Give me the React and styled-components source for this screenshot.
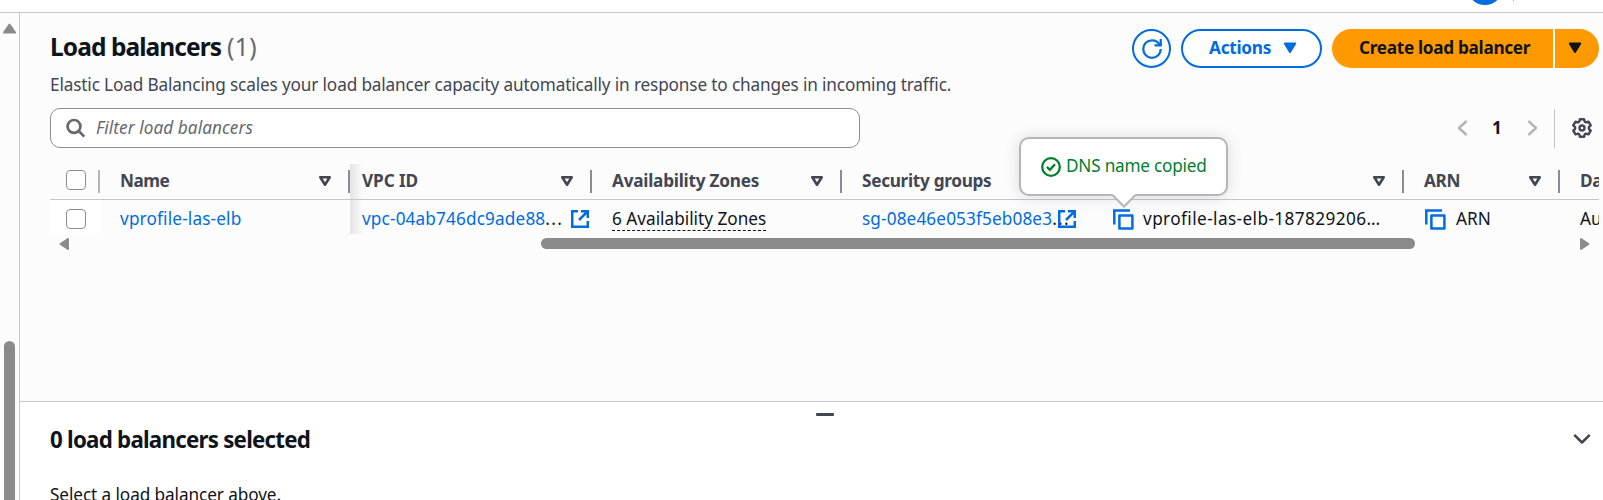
import React from 'react';
import styled, { createGlobalStyle, css } from 'styled-components';

const Global = createGlobalStyle`
  * { box-sizing: border-box; }
  body { margin: 0; background: #fff; overflow: hidden; }
`;

const Page = styled.div`
  display: flex;
  flex-direction: column;
  height: 500px;
  overflow: hidden;
  font-family: 'Noto Sans', 'Open Sans', sans-serif;
  font-size: 17.2px;
  line-height: 24px;
  color: #0f141a;
  white-space: nowrap;
`;

const TopBar = styled.header`
  flex: none;
  display: flex;
  justify-content: flex-end;
  align-items: flex-start;
  height: 13px;
  padding-right: 89px;
  overflow: hidden;
  border-bottom: 1px solid #c6c6cd;
`;

const Avatar = styled.span`
  width: 36px;
  height: 36px;
  margin-top: -31px;
  margin-right: 10px;
  border-radius: 50%;
  background: #006ce0;
`;

const BarTick = styled.span`
  width: 1px;
  height: 1px;
  background: #b4b4bb;
`;

const Body = styled.div`
  flex: 1;
  display: flex;
  min-height: 0;
`;

const Rail = styled.aside`
  flex: none;
  display: flex;
  flex-direction: column;
  width: 20px;
  padding: 10px 0 0 3px;
  background: #fcfcfd;
  border-right: 1px solid #c6c6cd;
`;

const RailThumb = styled.div`
  flex: 1;
  width: 11px;
  margin: 307px 0 0 1px;
  border-radius: 6px 6px 0 0;
  background: #8b8b8b;
`;

const Content = styled.div`
  flex: 1;
  min-width: 0;
  display: flex;
  flex-direction: column;
`;

const ListPanel = styled.main`
  flex: none;
  height: 388px;
  padding: 16px 4px 0 30px;
  background: #fcfcfd;
`;

const TitleRow = styled.div`
  display: flex;
  justify-content: space-between;
  height: 39px;
`;

const Title = styled.h1`
  margin: 0;
  font-size: 24.5px;
  font-weight: 700;
  line-height: 35px;
  letter-spacing: -0.93px;
`;

const Counter = styled.span`
  margin-left: 6px;
  font-weight: 400;
  letter-spacing: 0.4px;
  color: #656871;
`;

const Buttons = styled.div`
  display: flex;
  gap: 10px;
`;

const buttonBase = css`
  display: flex;
  align-items: center;
  height: 39px;
  padding: 0 0 1px;
  font: inherit;
  font-weight: 700;
  cursor: pointer;
`;

const OutlineButton = styled.button`
  ${buttonBase}
  width: ${(p) => p.$width}px;
  justify-content: ${(p) => (p.$round ? 'center' : 'flex-start')};
  padding-left: ${(p) => (p.$round ? 0 : 26)}px;
  padding-bottom: ${(p) => (p.$round ? 0 : 1)}px;
  gap: 12px;
  border: 2px solid #006ce0;
  border-radius: 20px;
  background: #fff;
  color: #006ce0;
  letter-spacing: -0.25px;
`;

const SplitButton = styled.div`
  display: flex;
  gap: 2px;
`;

const PrimaryButton = styled.button`
  ${buttonBase}
  justify-content: ${(p) => (p.$end ? 'center' : 'flex-start')};
  width: ${(p) => p.$width}px;
  border: 0;
  border-radius: ${(p) => (p.$end ? '0 20px 20px 0' : '20px 0 0 20px')};
  padding-left: ${(p) => (p.$end ? 0 : 27)}px;
  padding-right: ${(p) => (p.$end ? 4 : 0)}px;
  background: #ff9900;
  color: #0f141a;
  letter-spacing: -0.3px;
`;

const Description = styled.p`
  margin: 4px 0 0;
  line-height: 25px;
  letter-spacing: -0.14px;
  color: #424650;
`;

const Tools = styled.div`
  display: flex;
  align-items: center;
  justify-content: space-between;
  height: 40px;
  margin-top: 11px;
`;

const SearchBox = styled.div`
  display: flex;
  align-items: center;
  gap: 10px;
  width: 810px;
  height: 40px;
  padding-left: 15px;
  border: 1px solid #8c8c94;
  border-radius: 10px;
  background: #fff;
`;

const Placeholder = styled.span`
  font-style: italic;
  letter-spacing: 0.07px;
  color: #656871;
`;

const Pager = styled.nav`
  display: flex;
  align-items: center;
  padding-right: 7px;
`;

const PageNumber = styled.span`
  width: 10px;
  margin: 0 25px 0 24px;
  text-align: center;
  font-weight: 700;
`;

const PagerRule = styled.span`
  width: 1px;
  height: 39px;
  margin: 0 17px 0 16px;
  background: #c6c6cd;
`;

const Table = styled.div`
  margin-top: 16px;
  overflow-x: clip;
`;

const TableRow = styled.div`
  display: grid;
  grid-template-columns: 50px 250px 242px 250px 250px 312px 156px 39px;
  height: ${(p) => (p.$head ? 36 : 34)}px;
  border-bottom: ${(p) => (p.$head ? '1px solid #c6c6cd' : '0')};
`;

const stickyShadow = css`
  background-image: linear-gradient(to right, rgba(15, 20, 26, 0.1), rgba(15, 20, 26, 0));
  background-size: 13px 100%;
  background-repeat: no-repeat;
`;

const HeadCell = styled.div`
  display: flex;
  align-items: center;
  justify-content: space-between;
  min-width: 0;
  padding: 0 0 1px ${(p) => (p.$shadow ? 12 : 20)}px;
  font-weight: 700;
  letter-spacing: ${(p) => p.$spacing || '-0.23px'};
  color: #424650;
  ${(p) => p.$shadow && stickyShadow}
`;

const HeadTools = styled.span`
  display: flex;
  align-items: center;
  gap: 16px;
  height: 100%;
`;

const Divider = styled.i`
  width: 2px;
  height: 23px;
  background: ${(p) => (p.$light ? '#b4b4bb' : '#8c8c94')};
`;

const CheckCell = styled.div`
  display: flex;
  align-items: center;
  justify-content: space-between;
  padding-left: 16px;
  background: ${(p) => (p.$body ? '#fff' : 'transparent')};
`;

const Checkbox = styled.span`
  width: 20px;
  height: 20px;
  margin-top: ${(p) => (p.$body ? 4 : -3)}px;
  border: 1px solid #8c8c94;
  border-radius: 4px;
  background: #fff;
`;

const Cell = styled.div`
  position: relative;
  display: flex;
  align-items: center;
  min-width: 0;
  padding: 4px 0 0 ${(p) => (p.$shadow ? 12 : 20)}px;
  letter-spacing: ${(p) => p.$spacing || '0'};
  ${(p) => p.$shadow && stickyShadow}
`;

const Link = styled.a`
  color: #006ce0;
  text-decoration: none;
`;

const Dots = styled.span`
  letter-spacing: 1.3px;
`;

const IconSlot = styled.span`
  display: flex;
  margin: ${(p) => p.$margin || '0'};
`;

const Dashed = styled.span`
  height: 23px;
  line-height: 22px;
  border-bottom: 1px dashed #0f141a;
`;

const Popover = styled.div`
  position: absolute;
  left: -73px;
  top: -63px;
  z-index: 2;
  display: flex;
  align-items: flex-start;
  gap: 5px;
  width: 209px;
  height: 59px;
  padding: 15px 0 0 20px;
  border: 2px solid #b4b4bb;
  border-radius: 10px;
  background: #fff;
  box-shadow: 0 1px 16px 1px rgba(0, 7, 22, 0.12);
  color: #00802f;
  letter-spacing: -0.22px;
`;

const PopoverArrow = styled.svg`
  position: absolute;
  left: 90px;
  top: 55px;
`;

const HScroll = styled.div`
  display: flex;
  align-items: center;
  height: 19px;
  padding: 0 9px 0 9px;
`;

const HThumb = styled.div`
  width: 875px;
  height: 11px;
  margin: 0 165px 0 472px;
  border-radius: 6px;
  background: #8b8b8b;
`;

const SplitPanel = styled.section`
  flex: 1;
  display: flex;
  flex-direction: column;
  padding: 11px 12px 0 30px;
  border-top: 1px solid #c6c6cd;
  background: #fff;
`;

const Handle = styled.span`
  align-self: center;
  width: 18px;
  height: 3px;
  margin-left: 9px;
  border-radius: 1px;
  background: #424650;
`;

const PanelHead = styled.div`
  display: flex;
  align-items: center;
  justify-content: space-between;
  height: 32px;
  margin-top: 7px;
`;

const PanelTitle = styled.h2`
  margin: 1px 0 0;
  font-size: 22.3px;
  line-height: 32px;
  letter-spacing: -0.76px;
`;

const PanelText = styled.p`
  margin: 28px 0 0;
  letter-spacing: -0.09px;
`;

const Caret = () => (
  <svg width="14" height="12" viewBox="0 0 14 12" fill="currentColor">
    <path d="M1.8 1.500h10.4L7 10z" stroke="currentColor" strokeWidth="2" strokeLinejoin="round" />
  </svg>
);

const SortIcon = () => (
  <svg width="14" height="12" viewBox="0 0 14 12" fill="none" stroke="#424650" strokeWidth="2.6" strokeLinejoin="round">
    <path d="M2.300 2.200h9.400L7 9.700z" />
  </svg>
);

const RefreshIcon = () => (
  <svg width="20" height="20" viewBox="0 0 16 16" fill="none" stroke="currentColor" strokeWidth="1.8">
    <path d="M15 0v5h-5" />
    <path d="M15 8c0 3.87-3.13 7-7 7s-7-3.13-7-7 3.13-7 7-7c2.8 0 5.2 1.63 6.33 4" />
  </svg>
);

const SearchIcon = () => (
  <svg width="20" height="20" viewBox="0 0 20 20" fill="none" stroke="#656871" strokeWidth="2.700">
    <circle cx="8" cy="8.400" r="6.400" />
    <path d="M12.700 13l5.600 5.600" />
  </svg>
);

const Chevron = ({ d, w, h, color }) => (
  <svg width={w} height={h} viewBox={`0 0 ${w} ${h}`} fill="none" stroke={color} strokeWidth="2.5" strokeLinejoin="round">
    <path d={d} />
  </svg>
);

const GearIcon = () => (
  <svg width="20" height="20" viewBox="0 0 20 20" fill="none" stroke="#424650" strokeWidth="2.4" strokeLinejoin="round">
    <path d="M7.9 1.3h4.2l.7 2.4 1.2.7 2.5-.7 2.2 3.7-1.8 1.8v1.6l1.8 1.8-2.2 3.7-2.5-.7-1.2.7-.7 2.4H7.9l-.7-2.4-1.2-.7-2.5.7-2.2-3.7 1.8-1.8V9.2L1.3 7.4l2.2-3.7 2.5.7 1.2-.7z" />
    <circle cx="10" cy="10" r="2.5" />
  </svg>
);

const ExternalIcon = () => (
  <svg width="18" height="18" viewBox="0 0 18 18" fill="none" stroke="#006ce0" strokeWidth="2.5">
    <path d="M7 1.2H1.2v15.6h15.6V11" />
    <path d="M10 1.2h6.8V8M16.6 1.4L8 10" />
  </svg>
);

const CopyIcon = () => (
  <svg width="21" height="21" viewBox="0 0 21 21" fill="none" stroke="#006ce0" strokeWidth="2.500">
    <path d="M1.3 15.5V1.4H17" />
    <path d="M6.4 6.4h13v13h-13z" strokeLinejoin="round" />
  </svg>
);

const CheckIcon = () => (
  <svg width="20" height="20" viewBox="0 0 20 20" fill="none" stroke="#00802f" strokeWidth="2.3">
    <circle cx="10" cy="10" r="8.8" />
    <path d="M5.9 9.9l3 2.9L14 7.2" />
  </svg>
);

const ScrollArrow = ({ w, h, points }) => (
  <svg width={w} height={h} viewBox={`0 0 ${w} ${h}`}>
    <polygon points={points} fill="#8b8b8b" stroke="#8b8b8b" strokeWidth="2" strokeLinejoin="round" />
  </svg>
);

const Column = ({ label, spacing, shadow, sortable = true, divider = true }) => (
  <HeadCell $spacing={spacing} $shadow={shadow}>
    <span>{label}</span>
    <HeadTools>
      {sortable && <SortIcon />}
      {divider && <Divider />}
    </HeadTools>
  </HeadCell>
);

export default function App() {
  return (
    <Page>
      <Global />
      <TopBar>
        <Avatar />
        <BarTick />
      </TopBar>
      <Body>
        <Rail>
          <ScrollArrow w={13} h={11} points="6.5,1.5 12,9.6 1,9.6" />
          <RailThumb />
        </Rail>
        <Content>
          <ListPanel>
            <TitleRow>
              <Title>
                Load balancers<Counter>(1)</Counter>
              </Title>
              <Buttons>
                <OutlineButton $width={39} $round>
                  <RefreshIcon />
                </OutlineButton>
                <OutlineButton $width={141}>
                  Actions <Caret />
                </OutlineButton>
                <SplitButton>
                  <PrimaryButton $width={221}>Create load balancer</PrimaryButton>
                  <PrimaryButton $width={44} $end>
                    <Caret />
                  </PrimaryButton>
                </SplitButton>
              </Buttons>
            </TitleRow>
            <Description>
              Elastic Load Balancing scales your load balancer capacity automatically in response to changes in incoming traffic.
            </Description>
            <Tools>
              <SearchBox>
                <SearchIcon />
                <Placeholder>Filter load balancers</Placeholder>
              </SearchBox>
              <Pager>
                <Chevron w={11} h={16} d="M9.6 1L2 8l7.6 7" color="#b4b4bb" />
                <PageNumber>1</PageNumber>
                <Chevron w={11} h={16} d="M1.4 1L9 8l-7.6 7" color="#b4b4bb" />
                <PagerRule />
                <GearIcon />
              </Pager>
            </Tools>
            <Table>
              <TableRow $head>
                <CheckCell>
                  <Checkbox />
                  <Divider $light />
                </CheckCell>
                <Column label="Name" spacing="-0.5px" />
                <Column label="VPC ID" spacing="-0.1px" shadow />
                <Column label="Availability Zones" />
                <Column label="Security groups" spacing="-0.3px" sortable={false} divider={false} />
                <Column />
                <Column label="ARN" spacing="-0.39px" />
                <Column label="Date created" sortable={false} divider={false} />
              </TableRow>
              <TableRow>
                <CheckCell $body>
                  <Checkbox $body />
                </CheckCell>
                <Cell $spacing="0.15px">
                  <Link>vprofile-las-elb</Link>
                </Cell>
                <Cell $shadow $spacing="0.14px">
                  <Link>vpc-04ab746dc9ade88</Link>
                  <Dots>...</Dots>
                  <IconSlot $margin="0 0 0 8px">
                    <ExternalIcon />
                  </IconSlot>
                </Cell>
                <Cell>
                  <Dashed>6 Availability Zones</Dashed>
                </Cell>
                <Cell $spacing="0.12px">
                  <Link>sg-08e46e053f5eb08e3</Link>
                  <Dots>...</Dots>
                  <IconSlot $margin="0 0 0 -12px">
                    <ExternalIcon />
                  </IconSlot>
                </Cell>
                <Cell $spacing="0.4px">
                  <IconSlot $margin="0 9px 0 1px">
                    <CopyIcon />
                  </IconSlot>
                  <span>vprofile-las-elb-187829206…</span>
                  <Popover>
                    <IconSlot $margin="3px 0 0">
                      <CheckIcon />
                    </IconSlot>
                    DNS name copied
                    <PopoverArrow width="26" height="15" viewBox="0 0 26 15">
                      <path d="M1 0h24L13 12.5z" fill="#fff" />
                      <path d="M1.5 1L13 12.5 24.5 1" fill="none" stroke="#b4b4bb" strokeWidth="2" />
                    </PopoverArrow>
                  </Popover>
                </Cell>
                <Cell>
                  <IconSlot $margin="0 10px 0 1px">
                    <CopyIcon />
                  </IconSlot>
                  <span>ARN</span>
                </Cell>
                <Cell>August</Cell>
              </TableRow>
            </Table>
            <HScroll>
              <ScrollArrow w={10} h={12} points="1.5,6 9,1 9,11" />
              <HThumb />
              <ScrollArrow w={10} h={12} points="8.5,6 1,1 1,11" />
            </HScroll>
          </ListPanel>
          <SplitPanel>
            <Handle />
            <PanelHead>
              <PanelTitle>0 load balancers selected</PanelTitle>
              <Chevron w={18} h={12} d="M1.3 1.8L9 9.5l7.7-7.7" color="#424650" />
            </PanelHead>
            <PanelText>Select a load balancer above.</PanelText>
          </SplitPanel>
        </Content>
      </Body>
    </Page>
  );
}
